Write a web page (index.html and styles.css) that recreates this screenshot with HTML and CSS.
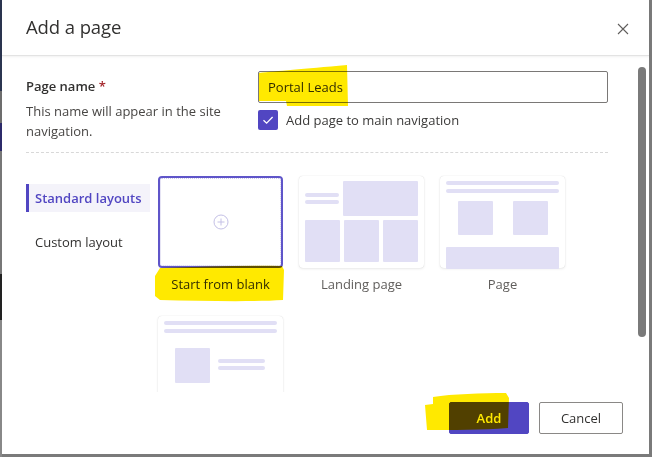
FILE: index.html
```html
<!DOCTYPE html>
<html lang="en">
<head>
<meta charset="utf-8">
<title>Add a page</title>
<link rel="stylesheet" href="styles.css">
</head>
<body>
<div class="backdrop-strip"></div>
<div class="dialog">
  <header class="dialog-header">
    <h1 class="dialog-title">Add a page</h1>
    <button class="close-btn" aria-label="Close">
      <svg width="12" height="12" viewBox="0 0 12 12"><path d="M1 1 L11 11 M11 1 L1 11" stroke="#605e5c" stroke-width="1.1" fill="none"/></svg>
    </button>
  </header>

  <div class="dialog-body">
    <div class="content">
      <div class="form-row">
        <div class="label-col">
          <div class="field-label">Page name <span class="req">*</span></div>
          <div class="field-desc">This name will appear in the site navigation.</div>
        </div>
        <div class="input-col">
          <div class="text-input">Portal Leads</div>
          <label class="check-row">
            <span class="checkbox">
              <svg width="14" height="14" viewBox="0 0 14 14"><path d="M2.5 7.3 L5.6 10.2 L11.6 4" stroke="#fff" stroke-width="1.3" fill="none"/></svg>
            </span>
            <span class="check-label">Add page to main navigation</span>
          </label>
        </div>
      </div>

      <div class="divider"></div>

      <div class="layouts">
        <nav class="layout-nav">
          <div class="nav-item active">Standard layouts</div>
          <div class="nav-item">Custom layout</div>
        </nav>
        <div class="layout-grid">
          <div class="layout-item">
            <div class="card selected">
              <div class="focus-ring"></div>
              <svg class="plus" width="16" height="16" viewBox="0 0 16 16"><circle cx="8" cy="8" r="7" stroke="#c4c0e6" stroke-width="1" fill="none"/><path d="M8 4.5 V11.5 M4.5 8 H11.5" stroke="#c4c0e6" stroke-width="1"/></svg>
            </div>
            <div class="card-label dark">Start from blank</div>
          </div>
          <div class="layout-item">
            <div class="card">
              <div class="landing">
                <div class="land-top">
                  <div class="land-lines"><span class="ln"></span><span class="ln"></span></div>
                  <div class="blk land-hero"></div>
                </div>
                <div class="land-bottom">
                  <div class="blk"></div><div class="blk"></div><div class="blk"></div>
                </div>
              </div>
            </div>
            <div class="card-label">Landing page</div>
          </div>
          <div class="layout-item">
            <div class="card">
              <div class="pagel">
                <span class="ln wide"></span>
                <span class="ln wide"></span>
                <div class="page-squares"><div class="blk sq"></div><div class="blk sq"></div></div>
                <div class="blk page-foot"></div>
              </div>
            </div>
            <div class="card-label">Page</div>
          </div>
          <div class="layout-item">
            <div class="card">
              <div class="article">
                <span class="ln wide"></span>
                <span class="ln wide"></span>
                <div class="art-row">
                  <div class="blk art-sq"></div>
                  <div class="art-lines"><span class="ln"></span><span class="ln"></span></div>
                </div>
              </div>
            </div>
          </div>
        </div>
      </div>
    </div>
    <div class="scrollbar"><div class="thumb"></div></div>
  </div>

  <footer class="dialog-footer">
    <button class="btn primary">Add</button>
    <button class="btn">Cancel</button>
  </footer>

  <svg class="marker" width="647" height="454" viewBox="0 0 647 454">
    <g fill="#ffe900">
      <path d="M257 73 C275 71 300 69 345 65 L346 106 L285 106 L284 101 L257 101 Z"/>
      <path d="M153 276 L158 268 C200 267 240 265 280 266 L282 270 L281 300 C250 302 200 301 158 300 L153 296 Z"/>
      <path d="M423 405 L431 404 L431 397 C450 394 480 393 504 393 L507 398 L506 428 C480 430 450 430 425 430 Z"/>
    </g>
  </svg>
</div>
</body>
</html>
```

FILE: styles.css
```css
* { box-sizing: border-box; }

html, body {
  margin: 0;
  padding: 0;
}

body {
  width: 652px;
  height: 457px;
  overflow: hidden;
  background: #7a7a7a;
  font-family: "Open Sans", "Noto Sans", sans-serif;
  font-size: 13px;
  color: #323130;
  position: relative;
}

.backdrop-strip {
  position: absolute;
  left: 0;
  top: 0;
  width: 2px;
  height: 457px;
  background: linear-gradient(#2b3550 0 20%, #6d6d6d 20% 27%, #2c2a6a 27% 33%, #777 33% 60%, #222 60% 70%, #888 70% 100%);
}

.dialog {
  position: relative;
  margin-left: 2px;
  width: 647px;
  height: 454px;
  background: #fff;
  display: flex;
  flex-direction: column;
}

.dialog-header {
  height: 56px;
  flex: none;
  display: flex;
  align-items: center;
  justify-content: space-between;
  padding: 0 20px 0 24px;
  border-bottom: 1px solid #e3e3e3;
  box-shadow: 0 1px 2px rgba(0,0,0,0.06);
}

.dialog-title {
  margin: 0;
  font-size: 18.5px;
  font-weight: 400;
  color: #323130;
  letter-spacing: -0.1px;
  position: relative;
  top: -1px;
}

.close-btn {
  border: 0;
  background: none;
  padding: 0;
  width: 12px;
  height: 12px;
  display: flex;
  position: relative;
  top: 1px;
}

.dialog-body {
  height: 336px;
  flex: none;
  display: flex;
  overflow: hidden;
}

.content {
  width: 606px;
  flex: none;
  padding: 15px 0 0 24px;
}

.form-row {
  display: flex;
}

.label-col {
  width: 232px;
  padding-top: 5px;
}

.field-label {
  font-weight: 600;
  line-height: 20px;
  color: #323130;
}

.req { color: #a4262c; }

.field-desc {
  margin-top: 5px;
  line-height: 20px;
  color: #484644;
  width: 210px;
}

.input-col {
  width: 350px;
}

.text-input {
  height: 32px;
  border: 1px solid #7a7876;
  border-radius: 2px;
  padding: 0 9px;
  line-height: 30px;
  color: #323130;
}

.check-row {
  margin-top: 7px;
  display: flex;
  align-items: center;
  gap: 8px;
  height: 20px;
}

.checkbox {
  width: 20px;
  height: 20px;
  border-radius: 2px;
  background: #5146c2;
  display: flex;
  align-items: center;
  justify-content: center;
}

.check-label { color: #3b3a39; }

.divider {
  margin-top: 11px;
  border-top: 1px dashed #d8d8d8;
}

.layouts {
  display: flex;
  gap: 8px;
  padding-top: 23px;
}

.layout-nav {
  width: 124px;
  padding-top: 8px;
  display: flex;
  flex-direction: column;
  gap: 16px;
}

.nav-item {
  height: 28px;
  line-height: 28px;
  padding-left: 6px;
  color: #323130;
  border-left: 3px solid transparent;
}

.nav-item.active {
  color: #5146c2;
  font-weight: 600;
  background: #f4f3fa;
  border-left-color: #5146c2;
}

.layout-grid {
  display: grid;
  grid-template-columns: repeat(3, 125px);
  column-gap: 16px;
  row-gap: 22px;
}

.card {
  position: relative;
  height: 92px;
  background: #fff;
  border-radius: 4px;
  box-shadow: 0 0 1px rgba(0,0,0,0.18), 0 1px 3px rgba(0,0,0,0.08);
  padding: 5px 6px;
}

.card.selected {
  border: 2px solid #5f55c9;
  box-shadow: none;
  display: flex;
  align-items: center;
  justify-content: center;
}

.focus-ring {
  position: absolute;
  inset: 0;
  border: 1px dotted #cdc9ea;
  border-radius: 2px;
}

.card-label {
  margin-top: 6px;
  line-height: 20px;
  text-align: center;
  color: #605e5c;
}

.card-label.dark { color: #323130; }

.blk {
  background: #e1dff5;
  border-radius: 1px;
}

.ln {
  display: block;
  height: 4px;
  background: #e1dff5;
  border-radius: 2px;
}

.landing {
  display: flex;
  flex-direction: column;
  gap: 4px;
}

.land-top {
  display: flex;
  gap: 4px;
  height: 35px;
}

.land-lines {
  width: 34px;
  padding-top: 12px;
  display: flex;
  flex-direction: column;
  gap: 3px;
}

.land-hero { flex: 1; }

.land-bottom {
  display: grid;
  grid-template-columns: repeat(3, 1fr);
  gap: 4px;
  height: 42px;
}

.pagel {
  display: flex;
  flex-direction: column;
  gap: 4px;
}

.page-squares {
  display: flex;
  justify-content: space-between;
  padding: 4px 11px 0 12px;
  height: 42px;
}

.sq { width: 35px; height: 34px; }

.page-foot {
  margin-top: 4px;
  height: 22px;
}

.article {
  display: flex;
  flex-direction: column;
  gap: 4px;
}

.art-row {
  display: flex;
  gap: 8px;
  padding: 11px 0 0 11px;
}

.art-sq { width: 35px; height: 35px; }

.art-lines {
  width: 47px;
  padding-top: 11px;
  display: flex;
  flex-direction: column;
  gap: 3px;
}

.scrollbar {
  flex: 1;
  display: flex;
  justify-content: flex-end;
  padding-right: 3px;
}

.thumb {
  margin-top: 11px;
  width: 8px;
  height: 270px;
  border-radius: 4px;
  background: #7a7a7a;
}

.dialog-footer {
  flex: 1;
  display: flex;
  justify-content: flex-end;
  align-items: flex-start;
  gap: 10px;
  padding: 10px 26px 0 0;
}

.btn {
  height: 32px;
  min-width: 84px;
  padding: 0 16px;
  border-radius: 2px;
  border: 1px solid #8a8886;
  background: #fff;
  font-family: inherit;
  font-size: 13px;
  font-weight: 400;
  color: #323130;
}

.btn.primary {
  min-width: 80px;
  background: #5146c2;
  border-color: #5146c2;
  color: #fff;
  font-weight: 600;
}

.marker {
  position: absolute;
  left: 0;
  top: 0;
  pointer-events: none;
  mix-blend-mode: multiply;
}
```
